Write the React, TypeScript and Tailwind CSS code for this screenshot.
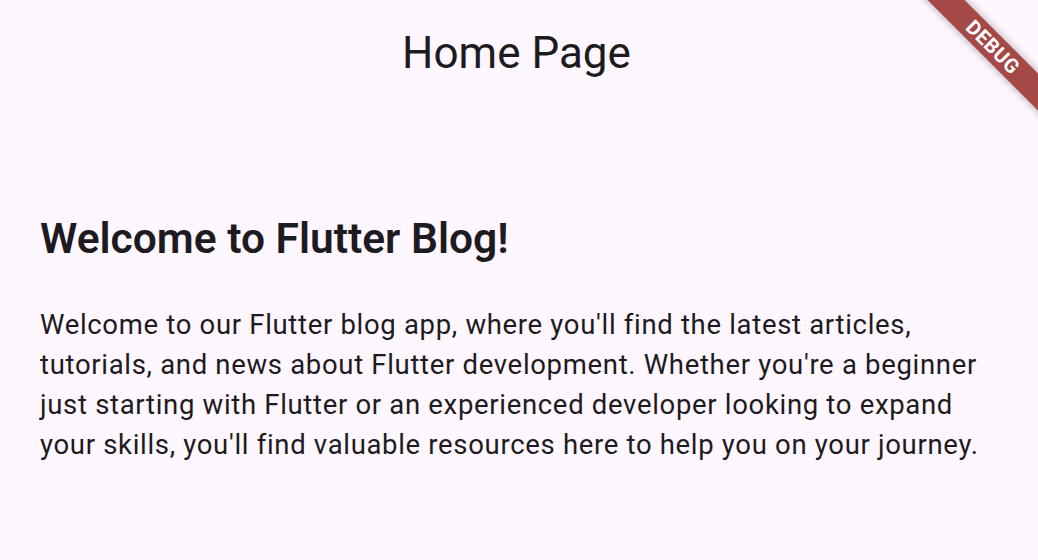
export default function App() {
  return (
    <div
      className="relative h-[560px] w-full overflow-hidden bg-[#fef7ff] text-[#1d1b20]"
      style={{ fontFamily: 'Roboto, "Noto Sans", sans-serif' }}
    >
      {/* app bar */}
      <header className="flex h-[106px] items-center justify-center pr-[5px]">
        <h1 className="text-[44px] leading-none font-normal">Home Page</h1>
      </header>

      {/* content */}
      <main className="px-10 pt-[107px]">
        <h2 className="text-[42.5px] leading-[52px] font-semibold">Welcome to Flutter Blog!</h2>
        <p className="mt-[40px] text-[27.5px] leading-[40px] tracking-[0.68px]">
          Welcome to our Flutter blog app, where you'll find the latest articles, tutorials, and news about Flutter
          development. Whether you're a beginner just starting with Flutter or an experienced developer looking to
          expand your skills, you'll find valuable resources here to help you on your journey.
        </p>
      </main>

      {/* debug banner */}
      <div className="pointer-events-none absolute top-[34px] left-[888px] flex h-[26px] w-[210px] rotate-45 items-center justify-center bg-[#a44848] shadow-[0_0_8px_rgba(0,0,0,0.35)]">
        <span className="text-[20px] leading-none font-bold tracking-[0.5px] text-white">DEBUG</span>
      </div>
    </div>
  )
}
